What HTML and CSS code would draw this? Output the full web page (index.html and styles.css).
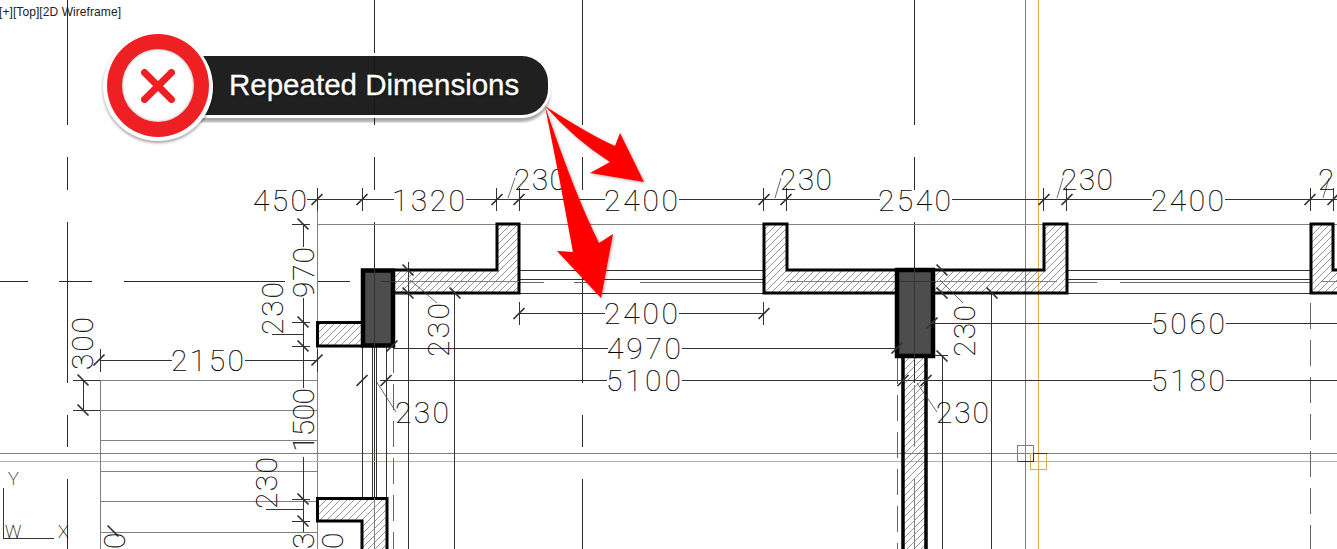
FILE: index.html
```html
<!DOCTYPE html>
<html lang="en">
<head>
<meta charset="utf-8">
<title>Repeated Dimensions</title>
<link rel="stylesheet" href="styles.css">
</head>
<body>
<main class="stage">
<svg class="drawing" width="1337" height="549" viewBox="0 0 1337 549" xmlns="http://www.w3.org/2000/svg">
<defs>
<pattern id="hatch" patternUnits="userSpaceOnUse" width="7" height="7"><path class="hatchline" d="M-1,8 L8,-1 M-1,1 L1,-1 M6,8 L8,6"/></pattern>
<g id="ftick"><path class="tick" d="M-5.5,5.5 L5.5,-5.5"/></g>
<g id="btick"><path class="tick" d="M-5.5,-5.5 L5.5,5.5"/></g>
<filter id="arrowshadow" x="-20%" y="-20%" width="140%" height="140%"><feDropShadow dx="1" dy="1" stdDeviation="1.5" flood-color="#000" flood-opacity=".35"/></filter>
</defs>

<!-- centre lines -->
<path class="axis" d="M67.5,0V125M67.5,157V190M67.5,222V383M67.5,415V447M67.5,479V549
M374.5,0V125M374.5,157V190M374.5,222V549
M582.5,0V125M582.5,157V190M582.5,222V383M582.5,415V447M582.5,479V549
M914.5,0V125M914.5,157V190M914.5,222V383M914.5,415V447M914.5,479V549
M0,281.5H28M59,281.5H92M124,281.5H285M317,281.5H350"/>
<path class="grey" d="M1025.5,0V549M0,453.5H1337M317.5,190V549M317,224.5H1337"/>
<path class="orange" d="M1038.5,0V549M0,461.5H1337"/>
<path class="grey" d="M100.5,380V549M100,380.5H317M100,410.5H317M100,440.5H317M100,471.5H317M100,501.5H317M100,532.5H317"/>
<path class="dashed" d="M393.5,347V549M897.5,358V549M1310.5,303V549"/>

<!-- cursor squares -->
<rect class="greybox" x="1017.5" y="445.5" width="16" height="16"/>
<rect class="orangebox" x="1030.5" y="453.5" width="16" height="16"/>
<path class="thin" d="M1017.5,461.5H1033.5V453.5H1046.5"/>

<!-- extension lines -->
<path class="thin" d="M362.5,347V498M372.5,347V498M376.5,347V498M386.5,347V498M408.5,262V549M454.5,293V549M942.5,355V549M991.5,293V549"/>
<path class="thin" d="M519,270.5H764M519,293.5H764M1067,270.5H1311M1067,293.5H1311M519,279.5H764M1067,279.5H1311"/>
<path class="wallmid" d="M519,282.5H544M574,282.5H604M640,282.5H764M1067,282.5H1097M1120,282.5H1311"/>

<!-- walls -->
<path class="wall" d="M395,270H497V224H519V293H395"/>
<path class="wall" d="M895,270H787V224H764V293H895"/>
<path class="wall" d="M935,270H1044V224H1067V293H935"/>
<path class="wall" d="M1337,293H1311V224H1333V270H1337"/>
<path class="wall" d="M361,322.5H317.5V346H361"/>
<path class="wall" d="M387,549V498.5H317.5V521H362V549"/>
<rect class="hatchfill" x="903" y="358" width="23" height="191"/>
<path class="wallside" d="M903,358V549M926,358V549"/>
<path class="grey" d="M395,281.5H519M786,281.5H895M935,281.5H1057M1321,281.5H1337M914.5,385V447M914.5,479V549M374.5,498V549"/>
<rect class="column" x="363" y="270.5" width="30" height="75"/>
<rect class="column" x="897" y="270" width="36" height="86"/>
<path class="thin" d="M374.5,268V347M914.5,268V358M381,281.5H395M900,281.5H935"/>

<!-- dimension lines -->
<path class="thin" d="M307,199.5H394M466,199.5H605M679,199.5H880M952,199.5H1152M1225,199.5H1337
M519,313.5H605M679,313.5H764
M393,348.5H608M682,348.5H895
M930,323.5H1152M1226,323.5H1337
M380,380.5H607M682,380.5H1152M1226,380.5H1337
M100,360.5H172M245,360.5H317
M303.5,224V247M303.5,298V388M303.5,457V532M83.5,380V410
M292,224.5H310M292,322.5H310M292,346.5H310M292,499.5H310M292,521.5H310M73,380.5H100M73,410.5H100
M272,334.5H303M266,509.5H303
M317.5,188V211M362.5,188V211M496.5,188V211M519.5,188V211M763.5,188V211M786.5,188V211M1043.5,188V211M1066.5,188V211M1310.5,188V211M1333.5,188V211
M519.5,302V325M763.5,302V325
M317.5,349V372M100.5,349V372
M935,355.5H948M395,293.5H405"/>
<path class="leader" d="M508,198L515,178M775,198L781,178M1057,198L1063,178M1323,198L1329,178M410,280L437,303M940,280L963,303M376,381L396,412M917,383L937,412"/>
<use href="#ftick" x="317" y="199.5"/><use href="#ftick" x="362" y="199.5"/><use href="#ftick" x="497" y="199.5"/><use href="#ftick" x="519" y="199.5"/><use href="#ftick" x="764" y="199.5"/><use href="#ftick" x="786" y="199.5"/><use href="#ftick" x="1044" y="199.5"/><use href="#ftick" x="1067" y="199.5"/><use href="#ftick" x="1310" y="199.5"/><use href="#ftick" x="1333" y="199.5"/>
<use href="#ftick" x="519" y="313.5"/><use href="#ftick" x="764" y="313.5"/>
<use href="#ftick" x="99" y="360"/><use href="#ftick" x="317" y="360"/>
<use href="#ftick" x="392" y="346"/><use href="#ftick" x="932" y="323"/><use href="#ftick" x="897" y="348"/>
<use href="#ftick" x="362" y="380.5"/><use href="#ftick" x="386" y="380.5"/><use href="#ftick" x="903" y="380.5"/><use href="#ftick" x="926" y="380.5"/>
<use href="#btick" x="303" y="224"/><use href="#btick" x="303" y="322"/><use href="#btick" x="303" y="346"/><use href="#btick" x="303" y="499"/><use href="#btick" x="303" y="521"/>
<use href="#btick" x="83" y="380"/><use href="#btick" x="83" y="410"/><use href="#btick" x="113" y="531"/>
<use href="#btick" x="408" y="270"/><use href="#btick" x="408" y="293"/><use href="#btick" x="455" y="293"/>
<use href="#btick" x="942" y="270"/><use href="#btick" x="942" y="293"/><use href="#btick" x="992" y="293"/><use href="#btick" x="942" y="356"/>

<!-- dimension text -->
<g class="dim">
<text x="253" y="211" textLength="54">450</text>
<text x="392" y="211" textLength="73">1320</text>
<text x="514" y="190" textLength="52">230</text>
<text x="604" y="211" textLength="74">2400</text>
<text x="780" y="190" textLength="52">230</text>
<text x="878" y="211" textLength="73">2540</text>
<text x="1061" y="190" textLength="52">230</text>
<text x="1151" y="211" textLength="73">2400</text>
<text x="1318" y="190">2</text>
<text x="604" y="324" textLength="74">2400</text>
<text x="607" y="359" textLength="74">4970</text>
<text x="1151" y="334" textLength="74">5060</text>
<text x="606" y="391" textLength="75">5100</text>
<text x="1151" y="391" textLength="74">5180</text>
<text x="171" y="371" textLength="73">2150</text>
<text x="395" y="423" textLength="54">230</text>
<text x="936" y="423" textLength="53">230</text>
<text transform="translate(93,370) rotate(-90)" textLength="53">300</text>
<text transform="translate(283,335) rotate(-90)" textLength="53">230</text>
<text transform="translate(314,298) rotate(-90)" textLength="51">970</text>
<text transform="translate(314,452) rotate(-90)" textLength="64">1500</text>
<text transform="translate(277,509) rotate(-90)" textLength="52">230</text>
<text transform="translate(449,357) rotate(-90)" textLength="54">230</text>
<text transform="translate(975,357) rotate(-90)" textLength="52">230</text>
<text transform="translate(314,549) rotate(-90)">3</text>
<text transform="translate(343,549) rotate(-90)">0</text>
<text transform="translate(125,549) rotate(-90)">0</text>
</g>

<!-- UCS icon -->
<path class="thin" d="M3.5,488V538.5H54"/>
<text class="ucs" x="8" y="485">Y</text>
<text class="ucs" x="5" y="538">W</text>
<text class="ucs" x="58" y="538">X</text>
<text class="vp" x="-1" y="16" textLength="122">[+][Top][2D Wireframe]</text>

<!-- arrows -->
<g class="arrows">
<path class="arrow" d="M545,106Q590,135 615,146L620,133L644,182L590,173L610,162Q575,140 545,106Z"/>
<path class="arrow" d="M545,106Q575,195 599,243L613,234L601,298L557,251L573,252Q560,180 545,106Z"/>
</g>
</svg>

<aside class="callout">
<div class="pill"><span class="pilltext">Repeated Dimensions</span></div>
<div class="badge">
<svg class="cross" width="34" height="34" viewBox="0 0 34 34" xmlns="http://www.w3.org/2000/svg"><path d="M3.5,3.5L30.5,30.5M30.5,3.5L3.5,30.5"/></svg>
</div>
</aside>
</main>
</body>
</html>
```

FILE: styles.css
```css
html, body { margin: 0; padding: 0; background: #fff; }
.stage { position: relative; width: 1337px; height: 549px; overflow: hidden; background: #fff; }
.drawing { display: block; }

.axis, .thin, .grey, .orange, .dashed, .wallmid, .greybox, .orangebox { fill: none; shape-rendering: crispEdges; stroke-width: 1; }
.axis { stroke: #2a2a2a; }
.thin { stroke: #333; }
.grey { stroke: #808080; }
.orange { stroke: #dfae4f; }
.dashed { stroke: #666; stroke-dasharray: 26 11; }
.wallmid { stroke: #666; }
.greybox { stroke: #808080; }
.orangebox { stroke: #dfae4f; }
.leader { fill: none; stroke: #444; stroke-width: .8; }
.hatchline { fill: none; stroke: #666; stroke-width: .7; }
.hatchfill { fill: url(#hatch); }
.wall { fill: url(#hatch); stroke: #000; stroke-width: 3; stroke-linejoin: miter; }
.wallside { fill: none; stroke: #000; stroke-width: 3.5; }
.column { fill: #4d4d4d; stroke: #000; stroke-width: 4.5; }
.tick { fill: none; stroke: #333; stroke-width: 1.7; }

.dim text { font-family: "Roboto", "Liberation Sans", sans-serif; font-weight: 100; font-size: 30px; fill: #000; stroke: #000; stroke-width: .15; }
.ucs { font-family: "Roboto", "Liberation Sans", sans-serif; font-weight: 100; font-size: 18px; fill: #000; stroke: #000; stroke-width: .15; }
.vp { font-family: "Liberation Sans", sans-serif; font-size: 12px; fill: #222; }

.arrow { fill: #f00; }
.arrows { filter: url(#arrowshadow); }

.callout { position: absolute; left: 103px; top: 33px; width: 450px; height: 110px; }
.pill {
  position: absolute; left: 70px; top: 23px; width: 375px; height: 59px; box-sizing: border-box;
  display: flex; align-items: center; padding: 0 0 2px 56px;
  background: rgba(20, 20, 20, .95); border-radius: 0 26px 26px 0;
  box-shadow: 0 0 0 3px #fff, 0 5px 3px 2px rgba(0, 0, 0, .35);
  clip-path: inset(-3px -8px -8px 0 round 0 28px 28px 0);
}
.pilltext { font-family: "Liberation Sans", Arial, sans-serif; font-size: 29.5px; line-height: 1; color: #fff; white-space: nowrap; -webkit-text-stroke: .3px #fff; text-shadow: 0 1px 2px rgba(0, 0, 0, .6); }
.badge {
  position: absolute; left: 0; top: 0; width: 110px; height: 108px; box-sizing: border-box;
  display: flex; align-items: center; justify-content: center;
  background: #fff; border-radius: 50%;
  box-shadow: 0 2px 3px rgba(0, 0, 0, .35);
}
.badge::before {
  content: ""; position: absolute; left: 4px; top: 1px; width: 102px; height: 103px; box-sizing: border-box;
  border-radius: 50%; border: 15px solid #ee2024; background: #fff;
  box-shadow: inset 0 0 3px rgba(0, 0, 0, .4);
}
.cross { position: relative; margin-top: -3px; }
.cross path { fill: none; stroke: #ee2024; stroke-width: 7; stroke-linecap: round; }
```
